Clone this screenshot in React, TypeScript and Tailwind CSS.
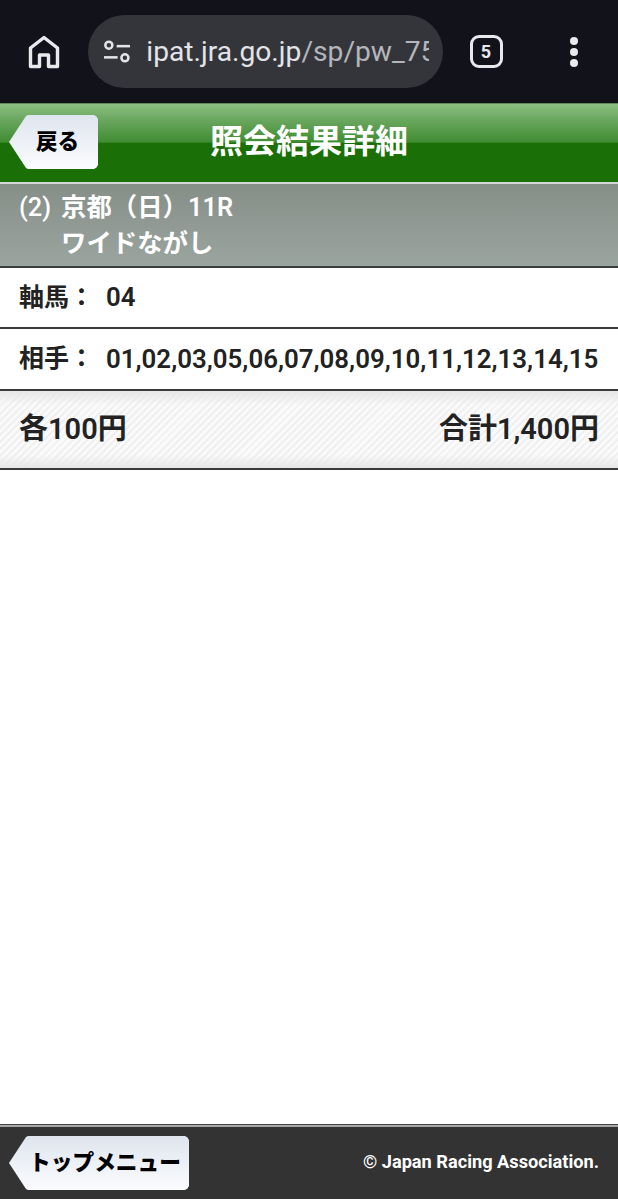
import React from "react";

const FONT = "[font-family:Roboto,'Noto_Sans_CJK_JP','Noto_Sans',sans-serif]";

function HomeIcon() {
  return (
    <svg width="32" height="34" viewBox="0 0 32 34" fill="none" stroke="#e8e9ec" strokeWidth="3.4" strokeLinejoin="round">
      <path d="M2.5 31.5V13L16 2.5L29.5 13V31.5H20.5V20H11.5V31.5Z" />
    </svg>
  );
}

function SiteIcon() {
  return (
    <svg width="28" height="26" viewBox="0 0 28 26" fill="none" stroke="#e3e4e8" strokeWidth="2.6">
      <circle cx="6" cy="6" r="3.6" />
      <path d="M14 7H28" />
      <path d="M1 18.5H15" />
      <circle cx="22.5" cy="19" r="3.6" />
    </svg>
  );
}

function BackTag({ label, className, textClass }: { label: string; className: string; textClass: string }) {
  return (
    <div className={`flex items-center justify-center bg-gradient-to-b from-[#dfe5ee] to-[#fbfcfe] [clip-path:polygon(19px_0,calc(100%-4px)_0,calc(100%-1.5px)_1.5px,100%_4px,100%_calc(100%-4px),calc(100%-1.5px)_calc(100%-1.5px),calc(100%-4px)_100%,19px_100%,17px_calc(100%-1px),0_50%,17px_1px)] ${className}`}>
      <span className={`font-black text-black ${textClass}`}>{label}</span>
    </div>
  );
}

export default function App() {
  return (
    <div className={`flex h-[1199px] w-[618px] flex-col overflow-hidden bg-white ${FONT}`}>
      <div className="flex h-[103px] shrink-0 items-center bg-[#12131a]">
        <div className="flex w-[88px] justify-center"><HomeIcon /></div>
        <div className="flex h-[73px] w-[355px] items-center rounded-full bg-[#34353b] pl-[15px] pr-[14px]">
          <SiteIcon />
          <span className="ml-[16px] overflow-hidden whitespace-nowrap text-[28.2px] leading-[1.2] text-[#e3e4e8]">ipat.jra.go.jp<span className="text-[#b4b6bc]">/sp/pw_75</span></span>
        </div>
        <div className="flex w-[86px] justify-center">
          <div className="flex h-[33px] w-[33px] items-center justify-center rounded-[9px] border-[3px] border-[#e8e9ec] text-[18px] font-bold text-[#e8e9ec]">5</div>
        </div>
        <div className="flex flex-1 flex-col items-center gap-[3px]">
          <span className="h-[8px] w-[8px] rounded-full bg-[#e8e9ec]" />
          <span className="h-[8px] w-[8px] rounded-full bg-[#e8e9ec]" />
          <span className="h-[8px] w-[8px] rounded-full bg-[#e8e9ec]" />
        </div>
      </div>

      <div className="relative flex h-[79px] shrink-0 items-center justify-center border-t border-t-[#5d8a57] bg-[linear-gradient(to_bottom,#8cc082_0%,#6aa75f_20%,#408d33_49%,#1a7006_50%,#1a7006_100%)] pb-[3px]">
        <span className="text-[33px] font-bold leading-none text-white">照会結果詳細</span>
        <div className="absolute left-[9px] top-[11px]">
          <BackTag label="戻る" className="h-[54px] w-[89px] pl-[8px]" textClass="text-[21.5px]" />
        </div>
      </div>

      <div className="h-[2px] shrink-0 bg-[#d5d9d5]" />

      <div className="h-[84px] shrink-0 border-b-2 border-b-[#3a3d3b] bg-gradient-to-b from-[#868e88] to-[#9ba59f] pl-[19px] pt-[5px] text-[25.4px] font-semibold leading-[36px] text-white">
        <div className="flex"><span className="w-[42px] text-[25.4px] font-medium">(2)</span><span>京都（日）11R</span></div>
        <div className="pl-[42px]">ワイドながし</div>
      </div>

      <div className="flex h-[61px] shrink-0 items-center border-b-2 border-b-[#3a3a3a] pl-[19px] text-[25px] font-semibold text-[#222]">
        <span className="w-[87px]">軸馬：</span><span className="text-[25.8px]">04</span>
      </div>
      <div className="flex h-[62px] shrink-0 items-center border-b-2 border-b-[#3a3a3a] pl-[19px] text-[25px] font-semibold text-[#222]">
        <span className="w-[87px]">相手：</span><span className="whitespace-nowrap text-[25.85px]">01,02,03,05,06,07,08,09,10,11,12,13,14,15</span>
      </div>
      <div className="flex h-[79px] shrink-0 items-center justify-between border-b-2 border-b-[#3a3a3a] bg-[linear-gradient(to_bottom,#e6e6e6_0,rgba(230,230,230,0)_14px,rgba(230,230,230,0)_64px,#e6e6e6_100%),repeating-linear-gradient(135deg,#f0f0f0_0,#f0f0f0_2px,#fafafa_2px,#fafafa_5px)] px-[19px] pt-[1px] text-[29px] font-semibold text-[#222]">
        <span>各100円</span>
        <span>合計1,400円</span>
      </div>

      <div className="flex-1" />

      <div className="h-[3px] shrink-0 border-t border-t-[#444] bg-[#a8a8a8]" />
      <div className="flex h-[72px] shrink-0 items-center justify-between bg-[#333] pl-[9px] pr-[19px]">
        <BackTag label="トップメニュー" className="h-[54px] w-[180px] pl-[12px]" textClass="text-[21.7px] whitespace-nowrap" />
        <span className="pb-[2px] text-[18.2px] font-bold text-white">© Japan Racing Association.</span>
      </div>
    </div>
  );
}
